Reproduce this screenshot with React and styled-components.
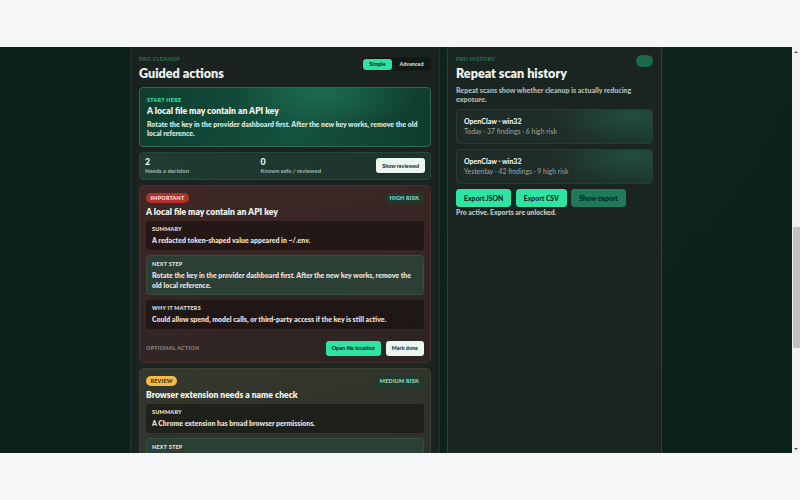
import React, { useLayoutEffect, useRef, useState } from 'react';
import styled, { createGlobalStyle, css } from 'styled-components';

const Global = createGlobalStyle`
  html, body { margin: 0; padding: 0; background: #f4f6f8; }
  body { font-family: Lato, "Noto Sans", "DejaVu Sans", sans-serif; -webkit-font-smoothing: antialiased; }
  *, *::before, *::after { box-sizing: border-box; }
`;

const Screen = styled.div`
  height: 500px;
  display: flex;
  flex-direction: column;
  justify-content: center;
`;

const Frame = styled.div`
  height: 406px;
  display: flex;
`;

const Viewport = styled.div`
  flex: 1;
  min-width: 0;
  overflow-y: scroll;
  scrollbar-width: none;
  background: #0c1e19;
  &::-webkit-scrollbar { display: none; }
`;

const Rail = styled.div`
  width: 8px;
  display: flex;
  flex-direction: column;
  background: #f1f1f1;
`;

const Arrow = styled.div`
  height: 9px;
  display: flex;
  align-items: center;
  justify-content: center;
  &::after {
    content: '';
    border-left: 2px solid transparent;
    border-right: 2px solid transparent;
    ${p => (p.$down
      ? css`border-top: 2px solid #505050;`
      : css`border-bottom: 2px solid #505050;`)}
  }
`;

const Track = styled.div`
  flex: 1;
  position: relative;
`;

const Thumb = styled.div`
  position: absolute;
  left: 1px;
  right: 0;
  background: #c1c1c1;
`;

const Page = styled.div`
  min-height: 1300px;
  padding: 20px 0 40px;
  background:
    radial-gradient(ellipse at 75% 20%, rgba(30, 80, 62, 0.16), transparent 60%),
    linear-gradient(180deg, #0c1e19, #0d211b);
`;

const Hero = styled.header`
  width: 532px;
  height: 531px;
  margin: 0 auto 20px;
  padding-top: 40px;
  color: #e9f1ed;
`;

const HeroTitle = styled.h1`
  margin: 0;
  font-size: 18px;
  font-weight: 800;
`;

const HeroText = styled.p`
  margin: 6px 0 0;
  font-size: 7px;
  color: #9fb0a9;
`;

const Columns = styled.main`
  display: grid;
  grid-template-columns: 310px 215px;
  gap: 7px;
  justify-content: center;
`;

const Panel = styled.section`
  background: ${p => (p.$side ? '#1a2421' : '#1a2320')};
  border: 1px solid ${p => (p.$side ? '#1f4a3b' : '#22342e')};
  border-radius: 6px;
  padding: 9px 8px 12px;
  display: flex;
  flex-direction: column;
  gap: 5px;
`;

const PanelHead = styled.div`
  display: flex;
  justify-content: space-between;
  align-items: flex-start;
`;

const Eyebrow = styled.div`
  font-size: 5.4px;
  line-height: 8px;
  font-weight: 900;
  letter-spacing: 0.06em;
  text-transform: uppercase;
  color: ${p => p.$color || '#2a6f54'};
`;

const PanelTitle = styled.h2`
  margin: 3px 0 0;
  font-size: 12.6px;
  line-height: 16px;
  font-weight: 800;
  color: #eef3f0;
`;

const Toggle = styled.div`
  margin-top: 2px;
  display: flex;
  gap: 2px;
  padding: 1.5px;
  border-radius: 4px;
  background: #111816;
`;

const ToggleBtn = styled.span`
  height: 11px;
  padding: 0 6px;
  display: flex;
  align-items: center;
  border-radius: 3px;
  font-size: 5.4px;
  font-weight: 900;
  color: ${p => (p.$active ? '#0b2a1e' : '#d5ddd9')};
  background: ${p => (p.$active ? '#30e2a2' : 'transparent')};
`;

const StartCard = styled.div`
  border: 1px solid #2a6a51;
  border-radius: 4px;
  padding: 8px 7px 7px;
  background:
    radial-gradient(ellipse 45% 90% at 64% 10%, rgba(40, 140, 100, 0.45), transparent 70%),
    linear-gradient(100deg, #0f3d2e 0%, #145240 55%, #0f3b2d 100%);
`;

const CardTitle = styled.div`
  margin-top: ${p => p.$mt || 2}px;
  font-size: 8.6px;
  line-height: 11px;
  font-weight: 800;
  color: #f1f5f3;
`;

const Body = styled.div`
  margin-top: ${p => p.$mt || 0}px;
  font-size: ${p => p.$fs || 6.95}px;
  line-height: ${p => p.$lh || 9.5}px;
  font-weight: 800;
  color: ${p => p.$color || '#d6e2dc'};
`;

const StatsCard = styled.div`
  border: 1px solid #28463c;
  border-radius: 4px;
  padding: 4px 5px;
  display: grid;
  grid-template-columns: 1fr 1fr auto;
  align-items: center;
  background: linear-gradient(90deg, #1f3b32, #1c332c);
`;

const StatNum = styled.div`
  font-size: 8.8px;
  line-height: 10px;
  font-weight: 900;
  color: #f1f5f3;
`;

const StatLabel = styled.div`
  font-size: 5.85px;
  line-height: 8px;
  font-weight: 900;
  color: #9cb0a8;
`;

const Button = styled.button`
  border: none;
  margin: 0;
  font-family: inherit;
  font-weight: 900;
  cursor: pointer;
  display: inline-flex;
  align-items: center;
  justify-content: center;
  white-space: nowrap;
  ${p => p.$size === 'lg'
    ? css`height: 18.5px; padding: 0 8px; font-size: 6.8px; border-radius: 3.5px;`
    : css`height: 14.5px; padding: 0 6px; font-size: 5.4px; border-radius: 3px;`}
  ${p => p.$variant === 'green' && css`background: #2fe3a2; color: #0b2a1f;`}
  ${p => p.$variant === 'light' && css`background: #ebf6f1; color: #17302a;`}
  ${p => p.$variant === 'muted' && css`background: #1e7a58; color: #072418;`}
`;

const tones = {
  red: css`
    border-color: #4b302c;
    background: linear-gradient(165deg, #402725 0%, #362624 45%, #2c2523 100%);
  `,
  amber: css`
    border-color: #3c3f33;
    background: linear-gradient(165deg, #35382c 0%, #2f322a 50%, #2a2d27 100%);
  `,
};

const Finding = styled.article`
  border: 1px solid;
  border-radius: 5px;
  padding: 7px 6px 6px;
  display: flex;
  flex-direction: column;
  ${p => tones[p.$tone]}
`;

const FindingHead = styled.div`
  display: flex;
  justify-content: space-between;
  align-items: center;
`;

const Badge = styled.span`
  height: 10.5px;
  padding: 0 4.5px;
  display: inline-flex;
  align-items: center;
  border-radius: 6px;
  font-size: 5.4px;
  font-weight: 900;
  letter-spacing: 0.04em;
  ${p => p.$tone === 'red' && css`background: #b3302c; color: #fbe1dc;`}
  ${p => p.$tone === 'amber' && css`background: #f2b94c; color: #4a3300;`}
`;

const RiskPill = styled.span`
  height: 11px;
  padding: 0 5px;
  display: inline-flex;
  align-items: center;
  border-radius: 6px;
  font-size: 5.4px;
  font-weight: 900;
  letter-spacing: 0.05em;
  background: #1e3b31;
  color: #9fdfc1;
`;

const Boxes = styled.div`
  margin-top: 3px;
  display: flex;
  flex-direction: column;
  gap: 5px;
`;

const InfoBox = styled.div`
  border-radius: 3.5px;
  padding: 4.5px 6px 5px;
  ${p => p.$kind === 'next'
    ? css`background: #2b3f35; border: 1px solid #34503f; padding: 3.5px 5px 4px;`
    : css`background: rgba(0, 0, 0, 0.38);`}
`;

const BoxLabel = styled.div`
  font-size: 5.4px;
  line-height: 8px;
  font-weight: 900;
  letter-spacing: 0.05em;
  color: ${p => p.$color || '#e8e4e0'};
`;

const Footer = styled.div`
  margin-top: 12px;
  display: flex;
  align-items: center;
  justify-content: space-between;
`;

const FooterActions = styled.div`
  display: flex;
  gap: 5px;
`;

const HistoryCard = styled.div`
  border: 1px solid #293b35;
  border-radius: 4px;
  padding: 6px 7px 7px;
  background:
    radial-gradient(ellipse 50% 100% at 88% 20%, rgba(38, 96, 74, 0.55), transparent 75%),
    linear-gradient(100deg, #1e2a27 0%, #1f2e2a 55%, #1c3a30 100%);
`;

const HistoryTitle = styled.div`
  font-size: 7px;
  line-height: 10px;
  font-weight: 900;
  color: #f0f4f2;
`;

const HistorySub = styled.div`
  font-size: 6.9px;
  line-height: 10px;
  font-weight: 400;
  color: #9ba7a2;
`;

const StatusPill = styled.span`
  width: 17px;
  height: 12px;
  border-radius: 6px;
  background: #1b6a4c;
`;

const ButtonRow = styled.div`
  display: flex;
  gap: 4.5px;
`;

const Note = styled.div`
  margin-top: -4px;
  font-size: 6.8px;
  line-height: 9px;
  font-weight: 800;
  color: #b7c3be;
`;

function InfoBlock({ kind, label, children }) {
  return (
    <InfoBox $kind={kind}>
      <BoxLabel>{label}</BoxLabel>
      <Body $mt={2} $lh={10} $color="#e3ddd9">{children}</Body>
    </InfoBox>
  );
}

const findings = [
  {
    tone: 'red',
    badge: 'IMPORTANT',
    risk: 'HIGH RISK',
    title: 'A local file may contain an API key',
    summary: 'A redacted token-shaped value appeared in ~/.env.',
    next: 'Rotate the key in the provider dashboard first. After the new key works, remove the old local reference.',
    why: 'Could allow spend, model calls, or third-party access if the key is still active.',
    action: 'Open file location',
  },
  {
    tone: 'amber',
    badge: 'REVIEW',
    risk: 'MEDIUM RISK',
    title: 'Browser extension needs a name check',
    summary: 'A Chrome extension has broad browser permissions.',
    next: 'Confirm you installed this extension on purpose. If you do not recognise it, remove it from the browser.',
    why: 'Extensions with broad permissions can read pages you visit.',
    action: 'Open extensions',
  },
];

const history = [
  { title: 'OpenClaw · win32', sub: 'Today · 37 findings · 6 high risk' },
  { title: 'OpenClaw · win32', sub: 'Yesterday · 42 findings · 9 high risk' },
];

export default function App() {
  const ref = useRef(null);
  const trackRef = useRef(null);
  const [thumb, setThumb] = useState({ top: 0, height: 0 });

  useLayoutEffect(() => {
    const el = ref.current;
    const track = trackRef.current;
    if (!el || !track) return;
    el.scrollTop = 573;
    const update = () => {
      const th = track.clientHeight;
      setThumb({
        top: (th * el.scrollTop) / el.scrollHeight,
        height: (th * el.clientHeight) / el.scrollHeight,
      });
    };
    update();
    el.addEventListener('scroll', update);
    return () => el.removeEventListener('scroll', update);
  }, []);

  return (
    <>
      <Global />
      <Screen>
        <Frame>
          <Viewport ref={ref}>
            <Page>
              <Hero>
                <HeroTitle>OpenClaw scan results</HeroTitle>
                <HeroText>Your latest local scan, sorted by what needs attention first.</HeroText>
              </Hero>
              <Columns>
                <Panel>
                  <PanelHead>
                    <div>
                      <Eyebrow>Pro cleanup</Eyebrow>
                      <PanelTitle>Guided actions</PanelTitle>
                    </div>
                    <Toggle>
                      <ToggleBtn $active>Simple</ToggleBtn>
                      <ToggleBtn>Advanced</ToggleBtn>
                    </Toggle>
                  </PanelHead>

                  <StartCard>
                    <Eyebrow $color="#3ae3a3">Start here</Eyebrow>
                    <CardTitle>A local file may contain an API key</CardTitle>
                    <Body $mt={2.5}>
                      Rotate the key in the provider dashboard first. After the new key works, remove the old local reference.
                    </Body>
                  </StartCard>

                  <StatsCard>
                    <div>
                      <StatNum>2</StatNum>
                      <StatLabel>Needs a decision</StatLabel>
                    </div>
                    <div>
                      <StatNum>0</StatNum>
                      <StatLabel>Known safe / reviewed</StatLabel>
                    </div>
                    <Button $variant="light">Show reviewed</Button>
                  </StatsCard>

                  {findings.map(f => (
                    <Finding key={f.title} $tone={f.tone}>
                      <FindingHead>
                        <Badge $tone={f.tone}>{f.badge}</Badge>
                        <RiskPill>{f.risk}</RiskPill>
                      </FindingHead>
                      <CardTitle $mt={3}>{f.title}</CardTitle>
                      <Boxes>
                        <InfoBlock label="SUMMARY">{f.summary}</InfoBlock>
                        <InfoBlock kind="next" label="NEXT STEP">{f.next}</InfoBlock>
                        <InfoBlock label="WHY IT MATTERS">{f.why}</InfoBlock>
                      </Boxes>
                      <Footer>
                        <BoxLabel as="span" $color="#8b8580">OPTIONAL ACTION</BoxLabel>
                        <FooterActions>
                          <Button $variant="green">{f.action}</Button>
                          <Button $variant="light">Mark done</Button>
                        </FooterActions>
                      </Footer>
                    </Finding>
                  ))}
                </Panel>

                <Panel $side>
                  <PanelHead>
                    <div>
                      <Eyebrow>Pro history</Eyebrow>
                      <PanelTitle>Repeat scan history</PanelTitle>
                    </div>
                    <StatusPill />
                  </PanelHead>
                  <Body $mt={-1.5} $lh={9} $fs={7} $color="#a7b3ae">
                    Repeat scans show whether cleanup is actually reducing exposure.
                  </Body>
                  {history.map(h => (
                    <HistoryCard key={h.sub}>
                      <HistoryTitle>{h.title}</HistoryTitle>
                      <HistorySub>{h.sub}</HistorySub>
                    </HistoryCard>
                  ))}
                  <ButtonRow>
                    <Button $size="lg" $variant="green">Export JSON</Button>
                    <Button $size="lg" $variant="green">Export CSV</Button>
                    <Button $size="lg" $variant="muted">Show export</Button>
                  </ButtonRow>
                  <Note>Pro active. Exports are unlocked.</Note>
                </Panel>
              </Columns>
            </Page>
          </Viewport>
          <Rail>
            <Arrow />
            <Track ref={trackRef}>
              <Thumb style={{ top: thumb.top, height: thumb.height }} />
            </Track>
            <Arrow $down />
          </Rail>
        </Frame>
      </Screen>
    </>
  );
}
